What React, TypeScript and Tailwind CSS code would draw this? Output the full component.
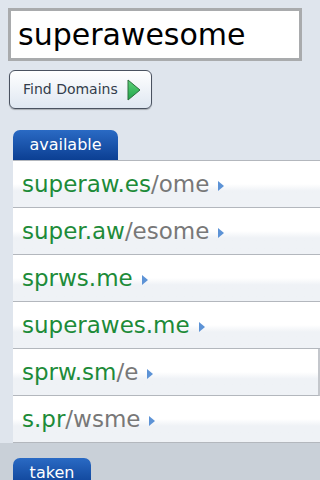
import React from 'react'

type Result = { hit: string; rest?: string; edge?: boolean }

const results: Result[] = [
  { hit: 'superaw.es', rest: '/ome' },
  { hit: 'super.aw', rest: '/esome' },
  { hit: 'sprws.me' },
  { hit: 'superawes.me' },
  { hit: 'sprw.sm', rest: '/e', edge: true },
  { hit: 's.pr', rest: '/wsme' },
]

function Arrow() {
  return (
    <svg width="6" height="10" viewBox="0 0 6 10" className="ml-[9px] mt-[3px]">
      <path d="M0 0 L6 5 L0 10 Z" fill="#5d93d6" />
    </svg>
  )
}

function Tab({ label, width }: { label: string; width: string }) {
  return (
    <div
      className={`${width} h-[30px] ml-[13px] rounded-t-[7px] bg-gradient-to-b from-[#2a6ac4] to-[#0b3f93] text-white text-[16px] flex items-center justify-center`}
    >
      {label}
    </div>
  )
}

export default function App() {
  return (
    <div
      className="w-[320px] h-[480px] overflow-hidden bg-[#dfe5ed] flex flex-col"
      style={{ fontFamily: '"DejaVu Sans", "Noto Sans", sans-serif' }}
    >
      {/* Search field */}
      <div className="pt-[8px] pl-[8px]">
        <div className="w-[294px] h-[53px] border-[3px] border-[#a9abad] bg-white flex items-center pl-[7px]">
          <span className="text-[30px] text-black leading-none">superawesome</span>
        </div>
      </div>

      {/* Find button */}
      <div className="pt-[9px] pl-[9px]">
        <button className="w-[143px] h-[39px] rounded-[6px] border border-[#4a5260] bg-gradient-to-b from-white to-[#dfe7f1] shadow-[0_1px_1px_rgba(0,0,0,0.25)] flex items-center pl-[13px]">
          <span className="text-[14px] text-[#333d4b]">Find Domains</span>
          <svg width="14" height="22" viewBox="0 0 14 22" className="ml-[9px]">
            <defs>
              <linearGradient id="g" x1="0" y1="0" x2="0" y2="1">
                <stop offset="0" stopColor="#5fd27a" />
                <stop offset="1" stopColor="#1fa54a" />
              </linearGradient>
            </defs>
            <path d="M1 1 L13 11 L1 21 Z" fill="url(#g)" stroke="#2c6e3d" strokeWidth="1" />
          </svg>
        </button>
      </div>

      {/* Available */}
      <div className="mt-[21px]">
        <Tab label="available" width="w-[105px]" />
        <div className="ml-[13px] border-t border-[#b3b7bd]">
          {results.map((r) => (
            <div
              key={r.hit + (r.rest ?? '')}
              className={`h-[47px] border-b border-[#b3b7bd] bg-gradient-to-b from-white from-50% to-[#eff2f6] to-65% flex items-center pl-[9px] ${
                r.edge ? 'border-r-2 border-r-[#c4c7cc]' : ''
              }`}
            >
              <span className="text-[23px] leading-none text-[#1d8b39]">{r.hit}</span>
              {r.rest && <span className="text-[23px] leading-none text-[#787878]">{r.rest}</span>}
              <Arrow />
            </div>
          ))}
        </div>
      </div>

      {/* Taken */}
      <div className="flex-1 bg-[#c9d0d8] pt-[15px]">
        <Tab label="taken" width="w-[78px]" />
      </div>
    </div>
  )
}
